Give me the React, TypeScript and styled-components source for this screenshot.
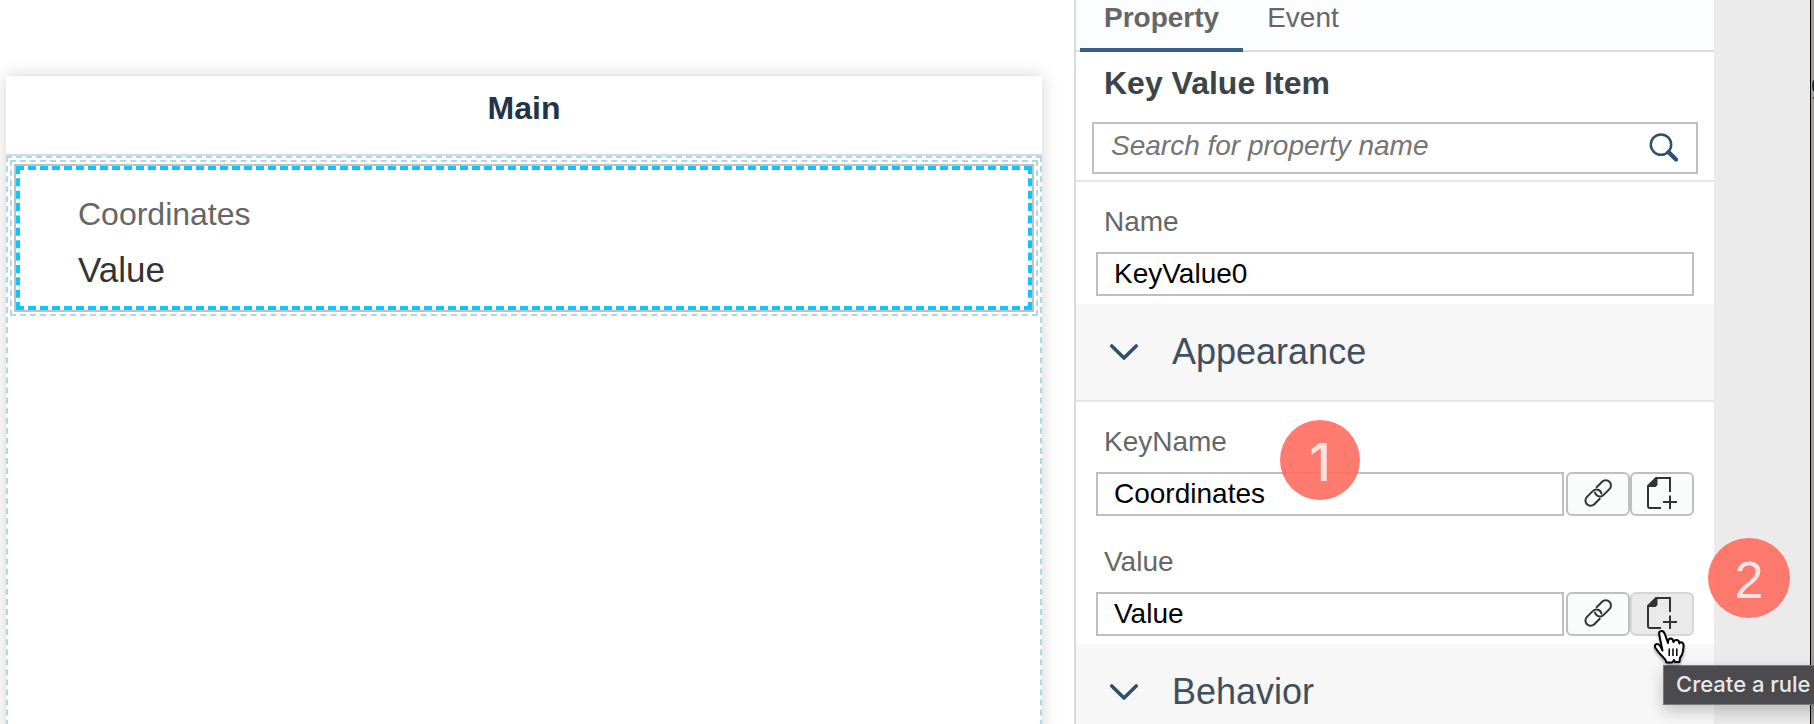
import React from 'react';
import styled, { createGlobalStyle } from 'styled-components';

const GlobalStyle = createGlobalStyle`
  * { box-sizing: border-box; }
  body { margin: 0; background: #fff; overflow: hidden; font-family: "Liberation Sans", Arial, sans-serif; }
`;

const Screen = styled.div`
  position: relative;
  display: flex;
  width: 1814px;
  height: 724px;
  overflow: hidden;
  background: #fff;
`;

const Workspace = styled.main`
  width: 1074px;
  flex: none;
  padding: 76px 32px 0 6px;
  background: #fff;
`;

const PageCard = styled.section`
  display: flex;
  flex-direction: column;
  height: 700px;
  background: #fff;
  box-shadow: 0 0 16px rgba(0, 0, 0, 0.18);
`;

const PageTitle = styled.h1`
  margin: 0;
  height: 80px;
  flex: none;
  border-bottom: 2px solid #d0dcea;
  color: #223548;
  font-size: 32px;
  font-weight: bold;
  line-height: 64px;
  text-align: center;
`;

const DropArea = styled.div`
  flex: 1;
  padding: 2px;
  border: 2px dashed #add8e6;
`;

const SectionOutline = styled.div`
  height: 156px;
  padding: 2px;
  border: 2px dashed #add8e6;
`;

const ItemOutline = styled.div`
  height: 148px;
  border: 2px solid #c0c0c0;
`;

const SelectedItem = styled.div`
  height: 144px;
  padding: 25px 58px 0;
  border: 4px dashed #09c8ff;
`;

const ItemKey = styled.div`
  color: #666;
  font-size: 32px;
  line-height: 38px;
`;

const ItemValue = styled.div`
  margin-top: 16px;
  color: #333;
  font-size: 35px;
  line-height: 42px;
`;

const Panel = styled.aside`
  width: 640px;
  height: 724px;
  flex: none;
  overflow: hidden;
  border-left: 2px solid #d9d9df;
  background: #fff;
`;

const Tabs = styled.nav`
  display: flex;
  height: 52px;
  padding-left: 4px;
  border-bottom: 2px solid #d9dbdf;
  background: #fcfdfe;
`;

const Tab = styled.div<{ $active?: boolean }>`
  height: 52px;
  padding: 0 24px;
  border-bottom: ${p => (p.$active ? '4px solid #346187' : '0')};
  color: #666;
  font-size: 28px;
  font-weight: ${p => (p.$active ? 'bold' : 'normal')};
  line-height: 36px;
`;

const PanelHead = styled.header`
  height: 130px;
  padding: 12px 16px 0;
  border-bottom: 2px solid #e5e5e5;
`;

const PanelTitle = styled.h2`
  margin: 0 0 20px;
  padding-left: 12px;
  color: #3b4549;
  font-size: 32px;
  font-weight: bold;
  line-height: 38px;
`;

const SearchBox = styled.div`
  display: flex;
  justify-content: space-between;
  width: 606px;
  height: 52px;
  padding: 0 16px 0 17px;
  border: 2px solid #bfbfbf;
  color: #757575;
  font-size: 28px;
  font-style: italic;
  line-height: 44px;
`;

const SearchSvg = styled.svg`
  display: block;
  width: 32px;
  height: 32px;
  margin-top: 8px;
`;

const Field = styled.div`
  padding: 0 20px;
`;

const Fields = styled.div<{ $rows: number }>`
  display: flex;
  flex-direction: column;
  gap: 29px;
  height: ${p => p.$rows * 120 + 2}px;
  padding-top: 23px;
`;

const Label = styled.label`
  display: block;
  height: 47px;
  padding-left: 8px;
  color: #666;
  font-size: 28px;
  line-height: 34px;
`;

const InputRow = styled.div`
  display: flex;
  height: 44px;
`;

const TextField = styled.div`
  flex: 1;
  padding-left: 16px;
  border: 2px solid #bfbfbf;
  color: #000;
  font-size: 28px;
  line-height: 39px;
  & + button { margin-left: 2px; }
`;

const IconButton = styled.button<{ $hover?: boolean }>`
  display: block;
  width: 64px;
  height: 44px;
  padding: 0;
  border: 2px solid ${p => (p.$hover ? '#d5d5d5' : '#bfbfbf')};
  border-radius: 6px;
  background: ${p => (p.$hover ? '#eaeaea' : '#fafcfc')};
  svg { display: block; }
`;

const GroupHeader = styled.div`
  display: flex;
  align-items: center;
  height: 98px;
  padding-left: 33px;
  border-bottom: 2px solid #e5e5e5;
  background: #f7f7f7;
  color: #40505f;
  font-size: 36px;
  line-height: 94px;
`;

const Chevron = styled.svg`
  width: 30px;
  height: 20px;
  margin-right: 33px;
`;

const Gutter = styled.div`
  width: 96px;
  flex: none;
  background: #ebebeb;
`;

const EdgeWindow = styled.div`
  width: 4px;
  overflow: hidden;
  border-left: 1px solid #000;
  background: #a09f9e;
`;

const EdgeSvg = styled.svg`
  display: block;
  width: 3px;
  height: 30px;
  margin-top: 76px;
`;

const Marker = styled.div<{ $x: number; $y: number; $w: number; $font: string }>`
  position: absolute;
  left: ${p => p.$x}px;
  top: ${p => p.$y}px;
  width: ${p => p.$w}px;
  height: 80px;
  border-radius: 50%;
  background: rgba(255, 107, 95, 0.9);
  color: rgba(255, 255, 255, 0.8);
  font-family: ${p => p.$font}, sans-serif;
  font-size: 52px;
  font-weight: 500;
  line-height: 85px;
  text-align: center;
`;

const Tooltip = styled.div`
  position: absolute;
  left: 1663px;
  top: 665px;
  width: 170px;
  height: 40px;
  padding-left: 12px;
  border: 1px solid #79797b;
  background: #4b4a4e;
  box-shadow: 0 6px 16px rgba(0, 0, 0, 0.22);
  color: #e8e8e9;
  font-family: Inter, sans-serif;
  font-size: 22px;
  font-weight: 500;
  line-height: 37px;
  white-space: nowrap;
`;

const Pointer = styled.svg`
  position: absolute;
  left: 1652px;
  top: 628px;
  width: 36px;
  height: 38px;
  filter: drop-shadow(0 2px 1.5px rgba(0, 0, 0, 0.35));
`;

const LinkIcon = () => (
  <svg width="60" height="40" viewBox="0 0 60 40" fill="none" stroke="#333" strokeWidth="2" strokeLinecap="round">
    <g transform="translate(30.2 19) rotate(-45)">
      <path d="M3 -5.2H10.700a5.200 5.200 0 0 1 0 10.400H2.500A5.200 5.200 0 0 1 -2 -2.600" />
      <path d="M-3 5.200H-10.700a5.200 5.200 0 0 1 0 -10.400H-2.500A5.200 5.200 0 0 1 2 2.600" />
    </g>
  </svg>
);

const RuleIcon = () => (
  <svg width="60" height="40" viewBox="0 0 60 40" fill="none" stroke="#333" strokeWidth="2">
    <path d="M29 34H18a2 2 0 0 1-2-2V12l8-8H38V18" />
    <path d="M16 12.7l8-8.7h1.500v7l-2 2H16z" fill="#333" stroke="none" />
    <path d="M38 21.500V35M31 28H45" />
  </svg>
);

const Down = () => (
  <Chevron viewBox="0 0 30 20" fill="none" stroke="#30506e" strokeWidth="3.600" strokeLinecap="round" strokeLinejoin="round">
    <path d="M2.800 4L15 16L27.200 4" />
  </Chevron>
);

const BoundField = ({ label, value, hover }: { label: string; value: string; hover?: boolean }) => (
  <Field>
    <Label>{label}</Label>
    <InputRow>
      <TextField>{value}</TextField>
      <IconButton aria-label="Bind to object"><LinkIcon /></IconButton>
      <IconButton aria-label="Create a rule" $hover={hover}><RuleIcon /></IconButton>
    </InputRow>
  </Field>
);

export default function App() {
  return (
    <Screen>
      <GlobalStyle />
      <Workspace>
        <PageCard>
          <PageTitle>Main</PageTitle>
          <DropArea>
            <SectionOutline>
              <ItemOutline>
                <SelectedItem>
                  <ItemKey>Coordinates</ItemKey>
                  <ItemValue>Value</ItemValue>
                </SelectedItem>
              </ItemOutline>
            </SectionOutline>
          </DropArea>
        </PageCard>
      </Workspace>
      <Panel>
        <Tabs>
          <Tab $active>Property</Tab>
          <Tab>Event</Tab>
        </Tabs>
        <PanelHead>
          <PanelTitle>Key Value Item</PanelTitle>
          <SearchBox>
            Search for property name
            <SearchSvg viewBox="0 0 32 32" fill="none" stroke="#30506e">
              <circle cx="13" cy="12.600" r="10.200" strokeWidth="2.500" />
              <path d="M20.500 20L28 27.500" strokeWidth="4.400" strokeLinecap="round" />
            </SearchSvg>
          </SearchBox>
        </PanelHead>
        <Fields $rows={1}>
          <Field>
            <Label>Name</Label>
            <InputRow><TextField>KeyValue0</TextField></InputRow>
          </Field>
        </Fields>
        <GroupHeader><Down />Appearance</GroupHeader>
        <Fields $rows={2}>
          <BoundField label="KeyName" value="Coordinates" />
          <BoundField label="Value" value="Value" hover />
        </Fields>
        <GroupHeader><Down />Behavior</GroupHeader>
      </Panel>
      <Gutter />
      <EdgeWindow>
        <EdgeSvg viewBox="0 0 3 30">
          <path d="M3 4.500Q2 6 2 9.500T3 15M3 22H2" stroke="#222" strokeWidth="1.500" fill="#222" />
        </EdgeSvg>
      </EdgeWindow>
      <Marker $x={1280} $y={420} $w={80} $font="Inter">1</Marker>
      <Marker $x={1708} $y={538} $w={82} $font="'Liberation Sans'">2</Marker>
      <Tooltip>Create a rule</Tooltip>
      <Pointer viewBox="0 0 36 38">
        <path
          d="M10.500 22.500L7.300 7Q6.500 3 9.500 3Q12 3 13 6.500L16 15Q16 10.500 18.500 10.500Q21 10.500 21.500 14Q22.500 11.500 25 12Q27 12.300 27.400 15.500Q28.500 13.500 30 14.500Q32 15.500 31.500 18.500L31 23Q30.500 27 28 30L27.500 34H23L22 32L20 34.500H14.500Q13.500 31 10.500 28.500Q7 25.500 3.500 20Q2.200 17.200 4.200 16.200Q6.500 15.500 8.500 18.500Z"
          fill="#fff" stroke="#000" strokeWidth="2" strokeLinejoin="round"
        />
        <path d="M17.200 20.500V28M21 20.500V28M24.800 20.500V28" stroke="#000" strokeWidth="1.500" />
      </Pointer>
    </Screen>
  );
}
